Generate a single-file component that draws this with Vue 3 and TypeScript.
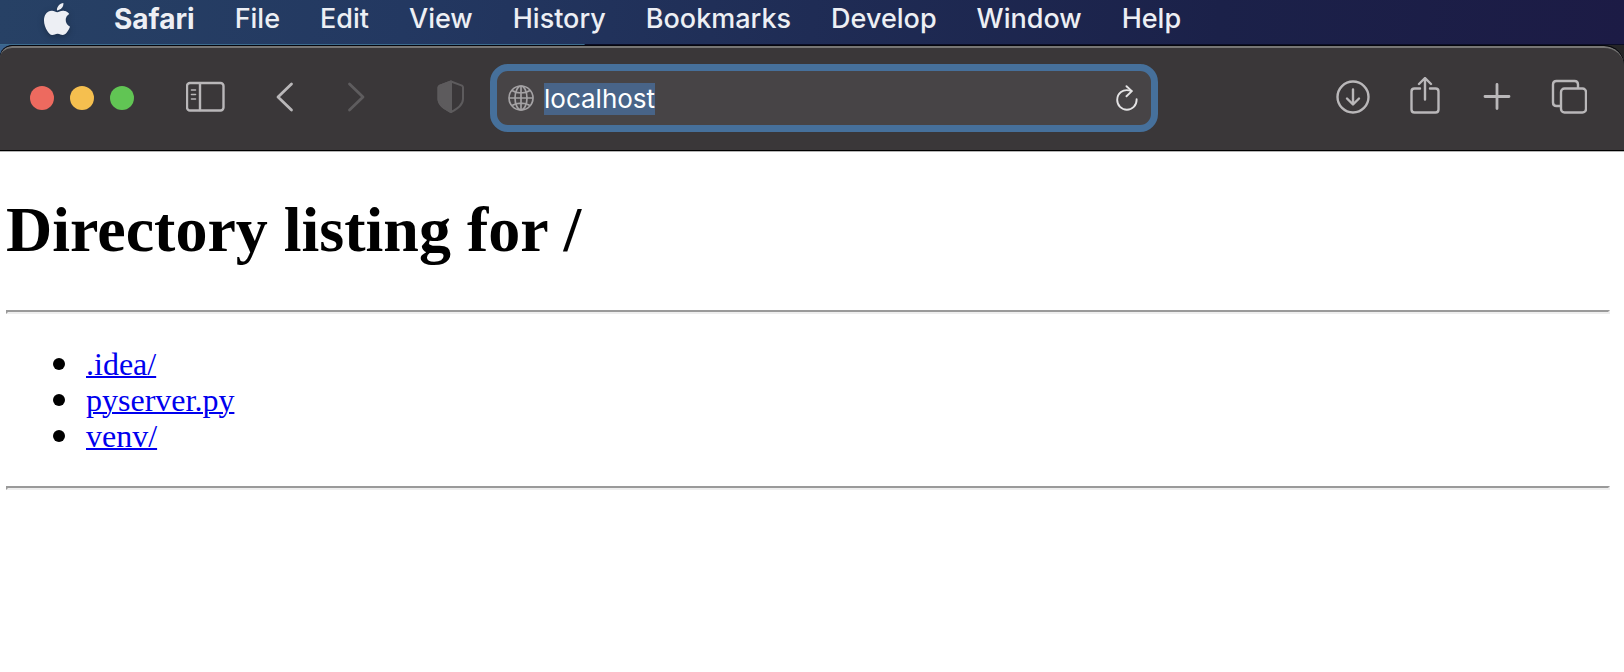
<script setup lang="ts">
import { onMounted, ref } from 'vue'

const menus: string[] = ['File', 'Edit', 'View', 'History', 'Bookmarks', 'Develop', 'Window', 'Help']
const entries: string[] = ['.idea/', 'pyserver.py', 'venv/']
const address = ref('localhost')
const field = ref<HTMLInputElement | null>(null)

onMounted(() => {
  field.value?.focus()
  field.value?.select()
})
</script>

<template>
  <div class="desktop">
    <nav class="menubar" aria-label="Menu bar">
      <button class="apple" type="button" aria-label="Apple menu">
        <svg width="32" height="32" viewBox="0 0 24 24" fill="currentColor">
          <path d="M12.152 6.896c-.948 0-2.415-1.078-3.96-1.04-2.04.027-3.91 1.183-4.961 3.014-2.117 3.675-.546 9.103 1.519 12.09 1.013 1.454 2.208 3.09 3.792 3.039 1.52-.065 2.09-.987 3.935-.987 1.831 0 2.35.987 3.96.948 1.637-.026 2.676-1.48 3.676-2.948 1.156-1.688 1.636-3.325 1.662-3.415-.039-.013-3.182-1.221-3.22-4.857-.026-3.04 2.48-4.494 2.597-4.559-1.429-2.09-3.623-2.324-4.39-2.376-2-.156-3.675 1.09-4.61 1.09zM15.53 3.83c.843-1.012 1.4-2.427 1.245-3.83-1.207.052-2.662.805-3.532 1.818-.78.896-1.454 2.338-1.273 3.714 1.338.104 2.715-.688 3.559-1.701" />
        </svg>
      </button>
      <button class="app" type="button">Safari</button>
      <button v-for="menu in menus" :key="menu" type="button">{{ menu }}</button>
    </nav>

    <div class="window">
      <header class="toolbar">
        <div class="leading">
          <div class="lights">
            <button class="light close" type="button" aria-label="Close"></button>
            <button class="light minimize" type="button" aria-label="Minimize"></button>
            <button class="light zoom" type="button" aria-label="Zoom"></button>
          </div>
          <button class="icon sidebar" type="button" aria-label="Sidebar">
            <svg width="40" height="32" viewBox="0 0 40 32" fill="none" stroke="currentColor" stroke-width="2.4" stroke-linecap="round">
              <rect x="1" y="2" width="36.500" height="27.500" rx="3" />
              <path d="M14 3v26" />
              <path d="M5.500 9h4M5.500 13.500h4M5.500 18h4" stroke-width="1.6" />
            </svg>
          </button>
          <div class="history">
            <button class="icon" type="button" aria-label="Back">
              <svg width="20" height="32" viewBox="0 0 20 32" fill="none" stroke="currentColor" stroke-width="2.8" stroke-linecap="round" stroke-linejoin="round"><path d="M15.500 3 2 16l13.500 13" /></svg>
            </button>
            <button class="icon" type="button" aria-label="Forward" disabled>
              <svg width="20" height="32" viewBox="0 0 20 32" fill="none" stroke="currentColor" stroke-width="2.8" stroke-linecap="round" stroke-linejoin="round"><path d="M3.500 3 17 16 3.500 29" /></svg>
            </button>
          </div>
          <button class="icon shield" type="button" aria-label="Privacy report">
            <svg width="28" height="34" viewBox="0 0 28 34" fill="none" stroke="currentColor" stroke-width="2" stroke-linejoin="round">
              <path d="M14 1.500 2.800 5.600Q1.500 6.200 1.500 7.500V19c0 6 6 9.500 12.500 13 6.500-3.500 12-7 12-13V7.500Q26 6.200 25 5.600Z" />
              <path d="M14 1.500 2.800 5.600Q1.500 6.200 1.500 7.500V19c0 6 6 9.500 12.500 13Z" fill="currentColor" />
            </svg>
          </button>
        </div>

        <form class="address" @submit.prevent>
          <svg class="globe" width="26" height="26" viewBox="0 0 26 26" fill="none" stroke="currentColor" stroke-width="1.7">
            <circle cx="13" cy="13" r="12" />
            <ellipse cx="13" cy="13" rx="6" ry="12" />
            <path d="M13 1v24M1 13h24M4 5.500c5 3.300 13 3.300 18 0M4 20.500c5-3.300 13-3.300 18 0" />
          </svg>
          <input ref="field" v-model="address" type="text" aria-label="Address" spellcheck="false">
          <button class="reload" type="button" aria-label="Reload">
            <svg width="22" height="26" viewBox="0 0 22 26" fill="none" stroke="currentColor" stroke-width="1.9" stroke-linecap="round" stroke-linejoin="round">
              <path d="M15.500 6C6.500 3 1.200 8.500 1.200 15a9.700 9.700 0 0 0 19.400 0v-.8" />
              <path d="m10.500 1.200 5.300 4.900-5.300 5.200" />
            </svg>
          </button>
        </form>

        <div class="trailing">
          <button class="icon" type="button" aria-label="Downloads">
            <svg width="36" height="40" viewBox="0 0 36 40" fill="none" stroke="currentColor" stroke-width="2.400" stroke-linecap="round" stroke-linejoin="round">
              <circle cx="18" cy="20" r="15.500" /><path d="M18 12.500v14.500M12 21.500l6 6 6-6" />
            </svg>
          </button>
          <button class="icon" type="button" aria-label="Share">
            <svg width="36" height="40" viewBox="0 0 36 40" fill="none" stroke="currentColor" stroke-width="2.400" stroke-linecap="round" stroke-linejoin="round">
              <path d="M13 11.500H7.500q-3 0-3 3V32.500q0 3 3 3h21q3 0 3-3V14.500q0-3-3-3H23M18 22.500V1.500M12 7l6-6 6 6" />
            </svg>
          </button>
          <button class="icon" type="button" aria-label="New tab">
            <svg width="36" height="40" viewBox="0 0 36 40" fill="none" stroke="currentColor" stroke-width="2.800" stroke-linecap="round"><path d="M18 7.500v24M6 19.500h24" /></svg>
          </button>
          <button class="icon" type="button" aria-label="Tab overview">
            <svg width="36" height="40" viewBox="0 0 36 40" fill="none" stroke="currentColor" stroke-width="2.400">
              <rect x="10" y="11.500" width="25" height="24" rx="3.500" />
              <path d="M10 29H5.500q-3.500 0-3.500-3.500V7.500Q2 4 5.500 4h18q3.500 0 3.500 3.500v4" />
            </svg>
          </button>
        </div>
      </header>

      <main class="page">
        <h1>Directory listing for /</h1>
        <hr>
        <ul>
          <li v-for="entry in entries" :key="entry"><a :href="'#' + entry">{{ entry }}</a></li>
        </ul>
        <hr>
      </main>
    </div>
  </div>
</template>

<style>
body {
  margin: 0;
  background: #fff;
}
</style>

<style scoped>
.desktop {
  min-height: 100vh;
  display: flex;
  flex-direction: column;
  background: linear-gradient(90deg, #3b638f 0 50%, #252527 50%);
  font-family: Inter, "Liberation Sans", sans-serif;
}

button {
  display: flex;
  padding: 0;
  border: 0;
  background: none;
  color: inherit;
  font: inherit;
}

svg {
  display: block;
}

.menubar {
  height: 45px;
  box-sizing: border-box;
  padding: 0 0 7px 41px;
  display: flex;
  align-items: center;
  gap: 40px;
  background:
    linear-gradient(#3d6c8f, #3d6c8f) left bottom / 36% 1px no-repeat,
    linear-gradient(#0b0d26, #0b0d26) left bottom / 100% 1px no-repeat,
    linear-gradient(95deg, #274165 0%, #233861 25%, #1f2c55 50%, #1b2149 75%, #1c1b45 100%);
  color: #edeff4;
  font-size: 27px;
  font-weight: 500;
  line-height: 36px;
  text-shadow: 0 2px 6px #0005;
}

.menubar .app {
  font-size: 28px;
  font-weight: 700;
}

.apple {
  padding-right: 1px;
}

.apple svg {
  filter: drop-shadow(0 2px 3px #0004);
}

.window {
  flex: 1;
  display: flex;
  flex-direction: column;
  overflow: hidden;
  border-top: 1px solid #05060c;
  border-radius: 12px 20px 0 0;
  background: #05060c;
}

.toolbar {
  height: 105px;
  box-sizing: border-box;
  display: grid;
  grid-template-columns: 490px minmax(0, 1fr) 466px;
  align-items: center;
  padding-bottom: 2px;
  border-top: 2px solid #777675;
  border-bottom: 1px solid #000;
  border-radius: 12px 20px 0 0;
  background: #3a3739;
  color: #b9b7b9;
}

.leading {
  display: flex;
  align-items: center;
  padding-left: 30px;
}

.icon {
  padding-bottom: 2px;
}

.lights {
  display: flex;
  gap: 16px;
}

.light {
  width: 24px;
  height: 24px;
  border-radius: 50%;
}

.close { background: #ed6a5f; }
.minimize { background: #f5bf4f; }
.zoom { background: #61c554; }

.sidebar {
  margin-left: 52px;
}

.history {
  display: flex;
  gap: 50px;
  margin-left: 50px;
}

.history button:disabled {
  color: #5e5c5e;
}

.shield {
  margin-left: 71px;
  color: #5d5b5d;
}

.address {
  height: 68px;
  box-sizing: border-box;
  display: flex;
  align-items: center;
  padding: 0 13px 0 11px;
  border: 7px solid #46709b;
  border-radius: 18px;
  background: #474446;
}

.globe {
  flex: none;
  color: #a4a2a4;
}

.address input {
  flex: 1;
  min-width: 0;
  height: 32px;
  margin: 2px 10px 0;
  padding: 0;
  border: 0;
  outline: 0;
  background: none;
  color: #fff;
  font: 400 26px/32px Inter, "Liberation Sans", sans-serif;
}

.address input::selection {
  background: #486488;
  color: #fff;
}

.reload {
  color: #e4e3e4;
}

.trailing {
  display: flex;
  justify-content: flex-end;
  gap: 36px;
  padding-right: 37px;
}

.page {
  flex: 1;
  padding: 41px 14px 0 6px;
  border-top: 1px solid #b5b5b5;
  background: #fff;
  color: #000;
  font: 32px/36px "Liberation Serif", serif;
}

h1 {
  margin: 0 0 43px;
  font-size: 64px;
  line-height: 74px;
}

hr {
  height: 4px;
  box-sizing: border-box;
  margin: 0;
  border: 2px solid;
  border-color: #9a9a9a #eee #eee #9a9a9a;
}

ul {
  margin: 32px 0;
  padding: 0;
  list-style: none;
}

li {
  display: flex;
  align-items: center;
  gap: 21px;
  padding-left: 47px;
}

li::before {
  content: "";
  width: 12px;
  height: 12px;
  border-radius: 50%;
  background: #000;
}

a {
  color: #00e;
  text-decoration: underline;
  text-decoration-thickness: 2px;
}
</style>
